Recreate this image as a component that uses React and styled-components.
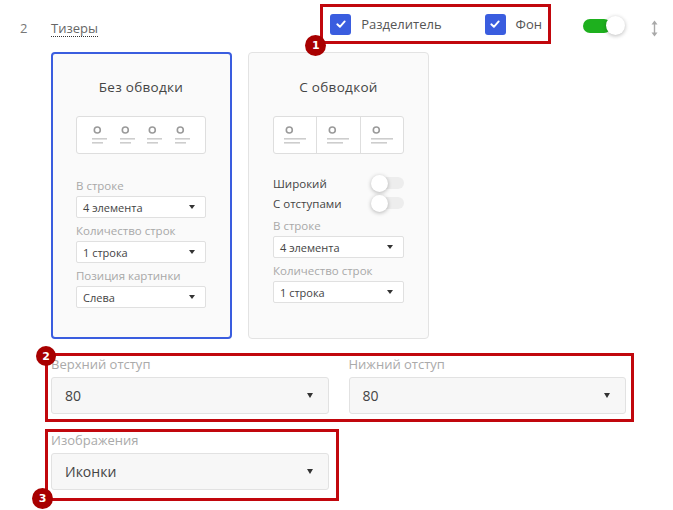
import styled, {createGlobalStyle} from "styled-components";

const GlobalStyle = createGlobalStyle`
  body {
    margin: 0;
    background: #fff;
    font-family: "Open Sans", "Noto Sans", sans-serif;
  }
`

const Check = () => (
  <svg width="12" height="12" viewBox="0 0 12 12">
    <path d="M2.3 6.3 L4.9 8.8 L9.7 3.4" fill="none" stroke="#fff" strokeWidth="1.9" strokeLinecap="round" strokeLinejoin="round"/>
  </svg>
)

const MoveIcon = () => (
  <svg width="9" height="17" viewBox="0 0 9 17">
    <path d="M4.5 3 V14" stroke="#a9a9a9" strokeWidth="1.4"/>
    <path d="M4.5 0.5 L1.5 4.5 H7.5 Z M4.5 16.5 L1.5 12.5 H7.5 Z" fill="#a9a9a9"/>
  </svg>
)

const TeaserIcon = ({w}) => (
  <svg width={w} height="18" viewBox={`0 0 ${w} 18`}>
    <circle cx="5.3" cy="4" r="3" fill="none" stroke="#9a9a9a" strokeWidth="1.6"/>
    <rect x="0" y="12" width={w} height="1.6" fill="#cdcdcd"/>
    <rect x="0" y="16" width={Math.round(w * 0.73)} height="1.6" fill="#cdcdcd"/>
  </svg>
)

const App = () => {
  return (
    <>
      <GlobalStyle/>
      <Page>
        <Header>
          <Num>2</Num>
          <Title>Тизеры</Title>
          <OptionsBox>
            <Badge $left={-18} $top={28} $size={21}>1</Badge>
            <CheckItem>
              <Checkbox><Check/></Checkbox>
              <CheckText>Разделитель</CheckText>
            </CheckItem>
            <CheckItem>
              <Checkbox><Check/></Checkbox>
              <CheckText>Фон</CheckText>
            </CheckItem>
          </OptionsBox>
          <Switch $on $w={42} $trackW={28} $trackH={14} $knob={19}/>
          <Move><MoveIcon/></Move>
        </Header>

        <Cards>
          <Card $active>
            <CardTitle>Без обводки</CardTitle>
            <Preview>
              <TeaserIcon w={15}/>
              <TeaserIcon w={15}/>
              <TeaserIcon w={15}/>
              <TeaserIcon w={15}/>
            </Preview>
            <Fields $top={25}>
              <SmallLabel>В строке</SmallLabel>
              <SmallSelect>4 элемента<Caret/></SmallSelect>
              <SmallLabel>Количество строк</SmallLabel>
              <SmallSelect>1 строка<Caret/></SmallSelect>
              <SmallLabel>Позиция картинки</SmallLabel>
              <SmallSelect>Слева<Caret/></SmallSelect>
            </Fields>
          </Card>

          <Card>
            <CardTitle>С обводкой</CardTitle>
            <Preview $bordered>
              <Cell><TeaserIcon w={22}/></Cell>
              <Cell><TeaserIcon w={22}/></Cell>
              <Cell><TeaserIcon w={22}/></Cell>
            </Preview>
            <Fields $top={19}>
              <ToggleRow>
                <span>Широкий</span>
                <Switch $w={33} $trackW={31} $trackH={12} $knob={17}/>
              </ToggleRow>
              <ToggleRow>
                <span>С отступами</span>
                <Switch $w={33} $trackW={31} $trackH={12} $knob={17}/>
              </ToggleRow>
              <SmallLabel>В строке</SmallLabel>
              <SmallSelect>4 элемента<Caret/></SmallSelect>
              <SmallLabel>Количество строк</SmallLabel>
              <SmallSelect>1 строка<Caret/></SmallSelect>
            </Fields>
          </Card>
        </Cards>

        <Marked $cols={2} $width={589} $pad="0 5px 5px 3px" $mt={14}>
          <Badge $left={-12} $top={-10} $size={20}>2</Badge>
          <Field>
            <Label>Верхний отступ</Label>
            <BigSelect>80<Caret $big/></BigSelect>
          </Field>
          <Field>
            <Label>Нижний отступ</Label>
            <BigSelect>80<Caret $big/></BigSelect>
          </Field>
        </Marked>

        <Marked $cols={1} $width={294} $pad="0 7px 8px 3px" $mt={7}>
          <Badge $left={-16} $top={56} $size={21}>3</Badge>
          <Field>
            <Label>Изображения</Label>
            <BigSelect>Иконки<Caret $big/></BigSelect>
          </Field>
        </Marked>
      </Page>
    </>
  )
}

export default App


const Page = styled.div`
  width: 673px;
  min-height: 510px;
  box-sizing: border-box;
  padding: 0 14px 0 20px;
`

const Header = styled.div`
  display: flex;
  align-items: center;
  height: 44px;
  padding-top: 4px;
  box-sizing: border-box;
  margin-bottom: 8px;
`

const Num = styled.div`
  width: 31px;
  margin-top: 8px;
  font-size: 13px;
  color: #777;
`

const Title = styled.span`
  margin-top: 8px;
  font-size: 13px;
  line-height: 16px;
  color: #666;
  border-bottom: 1px dotted #333;
`

const OptionsBox = styled.div`
  position: relative;
  margin-left: auto;
  height: 40px;
  box-sizing: border-box;
  border: 3px solid #c1070d;
  display: flex;
  align-items: center;
  gap: 43px;
  padding: 0 6px 0 7px;
`

const CheckItem = styled.label`
  display: flex;
  align-items: center;
  gap: 10px;
`

const Checkbox = styled.span`
  width: 21px;
  height: 21px;
  border-radius: 3px;
  background: #3a5ddf;
  display: flex;
  align-items: center;
  justify-content: center;
`

const CheckText = styled.span`
  font-size: 13px;
  color: #555;
`

const Badge = styled.span`
  position: absolute;
  left: ${p => p.$left}px;
  top: ${p => p.$top}px;
  width: ${p => p.$size}px;
  height: ${p => p.$size}px;
  border-radius: 50%;
  background: #a80000;
  color: #fff;
  font-family: "DejaVu Sans", sans-serif;
  font-weight: bold;
  font-size: 11px;
  display: flex;
  align-items: center;
  justify-content: center;
  z-index: 2;
`

const Switch = styled.span`
  position: relative;
  display: inline-block;
  flex: none;
  width: ${p => p.$w}px;
  height: ${p => p.$knob}px;

  &::before {
    content: "";
    position: absolute;
    left: ${p => p.$on ? 0 : p.$w - p.$trackW}px;
    top: ${p => (p.$knob - p.$trackH) / 2 + (p.$on ? 0.5 : 0)}px;
    width: ${p => p.$trackW}px;
    height: ${p => p.$trackH}px;
    border-radius: ${p => p.$trackH / 2}px;
    background: ${p => p.$on ? "#1eb01e" : "#ededed"};
  }

  &::after {
    content: "";
    position: absolute;
    left: ${p => p.$on ? p.$w - p.$knob : 0}px;
    top: 0;
    width: ${p => p.$knob}px;
    height: ${p => p.$knob}px;
    border-radius: 50%;
    background: #fff;
    box-shadow: 0 1px 4px rgba(0, 0, 0, .28);
  }

  ${Header} & {
    margin-left: 32px;
    margin-top: 2px;
  }
`

const Move = styled.div`
  margin-left: 25px;
  margin-top: 8px;
  display: flex;
`

const Cards = styled.div`
  display: flex;
  gap: 16px;
  margin-left: 31px;
`

const Card = styled.div`
  width: 181px;
  height: 287px;
  box-sizing: border-box;
  background: #fafafa;
  border-radius: 4px;
  border: ${p => p.$active ? "2px solid #3a5ddf" : "1px solid #e3e3e3"};
  padding: ${p => p.$active ? "24px 24px 0 23px" : "25px 24px 0 24px"};
`

const CardTitle = styled.div`
  text-align: center;
  font-size: 13.5px;
  line-height: 18px;
  color: #444;
  letter-spacing: 0.3px;
`

const Preview = styled.div`
  margin-top: 20px;
  height: 38px;
  box-sizing: border-box;
  background: #fff;
  border: 1px solid #dedede;
  border-radius: 3px;
  display: flex;
  align-items: center;
  justify-content: ${p => p.$bordered ? "stretch" : "space-between"};
  padding: ${p => p.$bordered ? "0" : "0 15px"};
`

const Cell = styled.div`
  flex: 1;
  height: 100%;
  display: flex;
  align-items: center;
  justify-content: center;
  border-right: 1px solid #dedede;

  &:last-child {
    border-right: 0;
  }
`

const Fields = styled.div`
  margin-top: ${p => p.$top}px;
  display: flex;
  flex-direction: column;
`

const SmallLabel = styled.div`
  font-size: 11.5px;
  line-height: 14px;
  color: #a8a8a8;
  margin-top: 6px;
  margin-bottom: 3px;

  &:first-child {
    margin-top: 0;
  }
`

const SmallSelect = styled.div`
  height: 22px;
  box-sizing: border-box;
  background: #fff;
  border: 1px solid #e0e0e0;
  border-radius: 2px;
  padding: 0 10px 0 6px;
  display: flex;
  align-items: center;
  justify-content: space-between;
  font-size: 11px;
  color: #444;
`

const Caret = styled.span`
  width: 0;
  height: 0;
  border-left: ${p => p.$big ? 3.5 : 3}px solid transparent;
  border-right: ${p => p.$big ? 3.5 : 3}px solid transparent;
  border-top: ${p => p.$big ? 5 : 4.5}px solid #333;
`

const ToggleRow = styled.div`
  height: 20px;
  display: flex;
  align-items: center;
  justify-content: space-between;
  font-size: 11.5px;
  color: #444;
`

const Marked = styled.div`
  position: relative;
  width: ${p => p.$width}px;
  box-sizing: border-box;
  margin: ${p => p.$mt}px 0 0 25px;
  border: 3px solid #c1070d;
  padding: ${p => p.$pad};
  display: grid;
  grid-template-columns: repeat(${p => p.$cols}, 1fr);
  column-gap: 20px;
`

const Field = styled.div`
  display: flex;
  flex-direction: column;
`

const Label = styled.div`
  font-size: 13px;
  line-height: 16px;
  color: #aaa;
  margin-bottom: 5px;
`

const BigSelect = styled.div`
  height: 37px;
  box-sizing: border-box;
  background: #f7f7f7;
  border: 1px solid #e2e2e2;
  border-radius: 3px;
  padding: 0 15px 0 13px;
  display: flex;
  align-items: center;
  justify-content: space-between;
  font-size: 14px;
  color: #444;
`
